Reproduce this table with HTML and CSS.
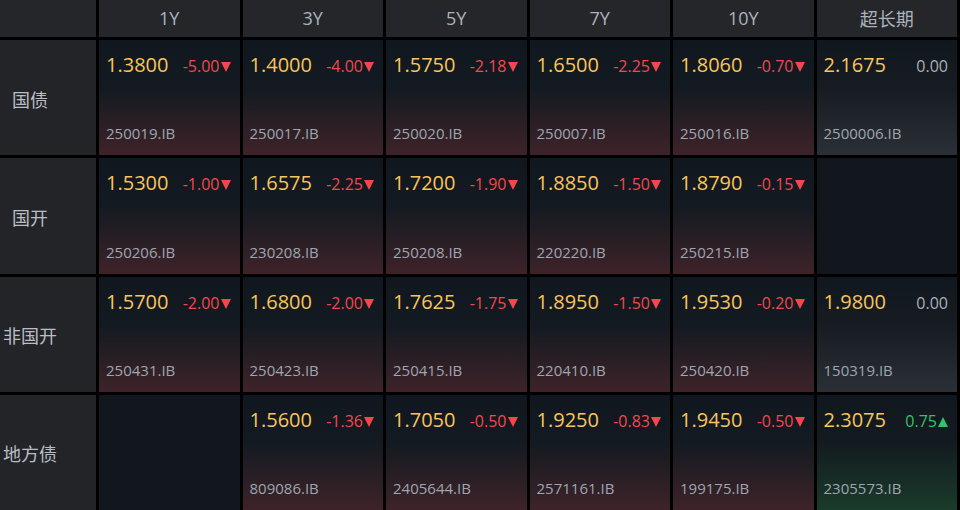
FILE: index.html
```html
<!DOCTYPE html>
<html lang="zh-CN">
<head>
<meta charset="utf-8">
<title>收益率矩阵</title>
<link rel="stylesheet" href="styles.css">
</head>
<body>
<div class="board">
  <div class="head corner"></div>
  <div class="head">1Y</div>
  <div class="head">3Y</div>
  <div class="head">5Y</div>
  <div class="head">7Y</div>
  <div class="head">10Y</div>
  <div class="head">超长期</div>

  <div class="label"><span>国债</span></div>
  <div class="cell down"><div class="top"><span class="price">1.3800</span><span class="chg">-5.00<i class="tri-down"></i></span></div><div class="code">250019.IB</div></div>
  <div class="cell down"><div class="top"><span class="price">1.4000</span><span class="chg">-4.00<i class="tri-down"></i></span></div><div class="code">250017.IB</div></div>
  <div class="cell down"><div class="top"><span class="price">1.5750</span><span class="chg">-2.18<i class="tri-down"></i></span></div><div class="code">250020.IB</div></div>
  <div class="cell down"><div class="top"><span class="price">1.6500</span><span class="chg">-2.25<i class="tri-down"></i></span></div><div class="code">250007.IB</div></div>
  <div class="cell down"><div class="top"><span class="price">1.8060</span><span class="chg">-0.70<i class="tri-down"></i></span></div><div class="code">250016.IB</div></div>
  <div class="cell flat"><div class="top"><span class="price">2.1675</span><span class="chg">0.00</span></div><div class="code">2500006.IB</div></div>

  <div class="label"><span>国开</span></div>
  <div class="cell down"><div class="top"><span class="price">1.5300</span><span class="chg">-1.00<i class="tri-down"></i></span></div><div class="code">250206.IB</div></div>
  <div class="cell down"><div class="top"><span class="price">1.6575</span><span class="chg">-2.25<i class="tri-down"></i></span></div><div class="code">230208.IB</div></div>
  <div class="cell down"><div class="top"><span class="price">1.7200</span><span class="chg">-1.90<i class="tri-down"></i></span></div><div class="code">250208.IB</div></div>
  <div class="cell down"><div class="top"><span class="price">1.8850</span><span class="chg">-1.50<i class="tri-down"></i></span></div><div class="code">220220.IB</div></div>
  <div class="cell down"><div class="top"><span class="price">1.8790</span><span class="chg">-0.15<i class="tri-down"></i></span></div><div class="code">250215.IB</div></div>
  <div class="cell empty"></div>

  <div class="label"><span>非国开</span></div>
  <div class="cell down"><div class="top"><span class="price">1.5700</span><span class="chg">-2.00<i class="tri-down"></i></span></div><div class="code">250431.IB</div></div>
  <div class="cell down"><div class="top"><span class="price">1.6800</span><span class="chg">-2.00<i class="tri-down"></i></span></div><div class="code">250423.IB</div></div>
  <div class="cell down"><div class="top"><span class="price">1.7625</span><span class="chg">-1.75<i class="tri-down"></i></span></div><div class="code">250415.IB</div></div>
  <div class="cell down"><div class="top"><span class="price">1.8950</span><span class="chg">-1.50<i class="tri-down"></i></span></div><div class="code">220410.IB</div></div>
  <div class="cell down"><div class="top"><span class="price">1.9530</span><span class="chg">-0.20<i class="tri-down"></i></span></div><div class="code">250420.IB</div></div>
  <div class="cell flat"><div class="top"><span class="price">1.9800</span><span class="chg">0.00</span></div><div class="code">150319.IB</div></div>

  <div class="label"><span>地方债</span></div>
  <div class="cell empty"></div>
  <div class="cell down"><div class="top"><span class="price">1.5600</span><span class="chg">-1.36<i class="tri-down"></i></span></div><div class="code">809086.IB</div></div>
  <div class="cell down"><div class="top"><span class="price">1.7050</span><span class="chg">-0.50<i class="tri-down"></i></span></div><div class="code">2405644.IB</div></div>
  <div class="cell down"><div class="top"><span class="price">1.9250</span><span class="chg">-0.83<i class="tri-down"></i></span></div><div class="code">2571161.IB</div></div>
  <div class="cell down"><div class="top"><span class="price">1.9450</span><span class="chg">-0.50<i class="tri-down"></i></span></div><div class="code">199175.IB</div></div>
  <div class="cell up"><div class="top"><span class="price">2.3075</span><span class="chg">0.75<i class="tri-up"></i></span></div><div class="code">2305573.IB</div></div>
</div>
</body>
</html>
```

FILE: styles.css
```css
* { box-sizing: border-box; }
html, body {
  margin: 0;
  padding: 0;
  background: #000;
  overflow: hidden;
}
body {
  font-family: "Open Sans", "Noto Sans CJK SC", sans-serif;
  width: 960px;
  height: 510px;
}
.board {
  display: grid;
  grid-template-columns: 96px repeat(6, 1fr);
  grid-template-rows: 37px repeat(4, 1fr);
  gap: 3px;
  width: 960px;
  height: 510px;
  padding-right: 3px;
  background: #000;
}
.head {
  background: #25262a;
  color: #abb3bc;
  font-size: 18px;
  display: flex;
  align-items: center;
  justify-content: center;
  padding-bottom: 2px;
}
.label {
  background: #232428;
  color: #b9bec6;
  font-size: 18px;
  font-family: "Noto Sans CJK SC", sans-serif;
  display: flex;
  align-items: center;
}
.label span {
  width: 60px;
  text-align: center;
  margin-top: 2px;
}
.cell {
  display: flex;
  flex-direction: column;
  justify-content: space-between;
  padding: 13px 9px 12px 7px;
}
.empty { background: #12171e; }
.down { background: linear-gradient(180deg, #11171e 0%, #141a21 42%, #3e2329 100%); }
.flat { background: linear-gradient(180deg, #11171e 0%, #161c22 42%, #2b3036 100%); }
.up { background: linear-gradient(180deg, #11171e 0%, #131b20 42%, #1a3b2a 100%); }
.top {
  display: flex;
  justify-content: space-between;
  align-items: baseline;
}
.price {
  color: #f9c45c;
  font-size: 20px;
  line-height: 24px;
}
.chg {
  font-size: 16px;
  line-height: 20px;
  color: #f3474d;
  display: inline-flex;
  align-items: baseline;
}
.flat .chg { color: #a9b1ba; }
.up .chg { color: #2ec36d; }
.tri-down, .tri-up {
  display: inline-block;
  width: 0;
  height: 0;
  margin-left: 1px;
  border-left: 5px solid transparent;
  border-right: 5px solid transparent;
}
.tri-down { border-top: 10px solid #f3474d; }
.tri-up { border-bottom: 10px solid #2ec36d; }
.code {
  color: #9ea6b0;
  font-size: 15px;
  line-height: 20px;
}
```
